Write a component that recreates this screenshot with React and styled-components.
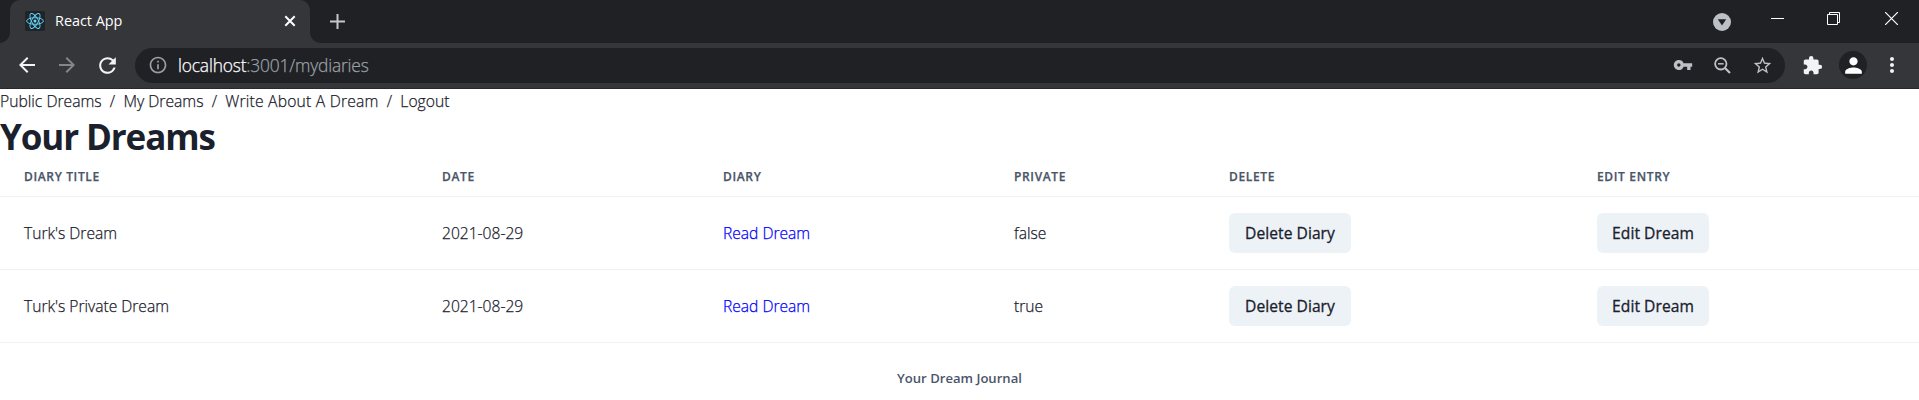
import React from "react";
import styled, { createGlobalStyle } from "styled-components";
import {
  MdArrowBack, MdArrowForward, MdRefresh, MdInfoOutline, MdVpnKey,
  MdStarBorder, MdExtension, MdPerson, MdMoreVert,
} from "react-icons/md";

const GlobalStyle = createGlobalStyle`
  *, *::before, *::after { box-sizing: border-box; }
  body {
    margin: 0;
    background: #fff;
    color: #1a202c;
    font-family: "Open Sans", "Noto Sans", sans-serif;
    font-size: 15.6px;
    font-weight: 300;
    line-height: 24px;
    -webkit-text-stroke: 0.25px currentColor;
    overflow: hidden;
  }
  svg { display: block; flex: none; }
`;

const Browser = styled.header`
  background: #35363a;
  border-bottom: 1px solid #28292c;
  height: 89px;
`;

const TabStrip = styled.div`
  display: flex;
  height: 43px;
  padding-left: 10px;
  background: #202124;
`;

const Tab = styled.div`
  position: relative;
  display: flex;
  align-items: center;
  width: 300px;
  height: 43px;
  padding: 0 14px 1px 15px;
  background: #35363a;
  border-radius: 10px 10px 0 0;

  &::before, &::after {
    content: "";
    position: absolute;
    bottom: 0;
    width: 10px;
    height: 10px;
  }
  &::before {
    left: -10px;
    background: radial-gradient(circle at 0 0, transparent 9.5px, #35363a 10px);
  }
  &::after {
    right: -10px;
    background: radial-gradient(circle at 100% 0, transparent 9.5px, #35363a 10px);
  }
`;

const TabTitle = styled.span`
  flex: 1;
  margin-left: 10px;
  color: #fff;
  font-size: 14.4px;
  font-weight: 400;
  -webkit-text-stroke: 0;
`;

const NewTab = styled.div`
  display: flex;
  align-items: center;
  padding: 0 0 1px 20px;
`;

const WindowControls = styled.div`
  display: flex;
  align-items: flex-start;
  margin-left: auto;
  padding: 12px 21px 0 0;
`;

const ControlIcon = styled.svg`
  margin-left: ${(p) => p.$gap}px;
  margin-top: ${(p) => p.$drop || 0}px;
`;

const Toolbar = styled.div`
  display: flex;
  align-items: center;
  height: 45px;
  padding: 0 0 1px 15px;
  color: #f1f3f4;
`;

const NavButton = styled.span`
  flex: none;
  width: 40px;
  color: ${(p) => (p.$disabled ? "#85868a" : "#f1f3f4")};
`;

const AddressBar = styled.div`
  display: flex;
  align-items: center;
  flex: none;
  width: 1650px;
  height: 35px;
  padding: 0 12px 0 13px;
  border-radius: 18px;
  background: #202124;
  color: #bdc1c6;
`;

const Url = styled.span`
  flex: 1;
  margin-left: 10px;
  color: #9aa0a6;
  font-size: 17.4px;
  letter-spacing: -0.18px;
`;

const Host = styled.span`
  color: #fff;
`;

const AddressActions = styled.div`
  display: flex;
  align-items: center;
  gap: 21px;
`;

const Avatar = styled.span`
  display: grid;
  place-items: center;
  width: 28px;
  height: 28px;
  margin: 0 13px 0 16px;
  border-radius: 50%;
  background: #202124;
  color: #fff;
`;

const Extensions = styled.span`
  margin-left: 17px;
`;

const SiteNav = styled.nav`
  display: flex;
  height: 24px;
  font-size: 15.7px;
`;

const NavLink = styled.a`
  color: inherit;
  letter-spacing: ${(p) => p.$spacing || 0}px;
`;

const Slash = styled.span`
  margin: 0 8.2px;
`;

const Title = styled.h1`
  height: 43px;
  margin: 0;
  padding-top: 2px;
  font-size: 35px;
  font-weight: 700;
  line-height: 43px;
  letter-spacing: -1.1px;
  -webkit-text-stroke: 0;
`;

const Table = styled.table`
  width: 100%;
  table-layout: fixed;
  border-collapse: separate;
  border-spacing: 0;
`;

const Th = styled.th`
  width: ${(p) => p.$width}px;
  height: 41px;
  padding: 13px 24px 11px;
  border-bottom: 1px solid #edf2f7;
  color: #4a5568;
  font-size: 12px;
  font-weight: 600;
  line-height: 16px;
  letter-spacing: 0.65px;
  text-align: left;
  text-transform: uppercase;
`;

const Td = styled.td`
  height: 73px;
  padding: 16px 24px;
  border-bottom: 1px solid #edf2f7;
`;

const ReadLink = styled.a`
  color: #0000ff;
`;

const Button = styled.button`
  display: block;
  width: ${(p) => p.$width}px;
  height: 40px;
  padding: 0;
  border: 0;
  border-radius: 6px;
  background: #edf2f7;
  color: #1a202c;
  font: 400 15.6px/41px "Open Sans", "Noto Sans", sans-serif;
  letter-spacing: 0.05px;
  -webkit-text-stroke: 0.3px currentColor;
  white-space: nowrap;
`;

const Footer = styled.footer`
  padding-top: 25px;
  color: #4a5568;
  font-size: 13.1px;
  font-weight: 600;
  line-height: 20px;
  text-align: center;
  -webkit-text-stroke: 0;
`;

const columns = [
  ["Diary Title", 418],
  ["Date", 281],
  ["Diary", 291],
  ["Private", 215],
  ["Delete", 368],
  ["Edit Entry", 346],
];

const diaries = [
  { title: "Turk's Dream", date: "2021-08-29", isPrivate: false },
  { title: "Turk's Private Dream", date: "2021-08-29", isPrivate: true },
];

const links = [
  { label: "Public Dreams" },
  { label: "My Dreams" },
  { label: "Write About A Dream", spacing: 0.2 },
  { label: "Logout" },
];

function ReactLogo() {
  return (
    <svg width="20" height="20" viewBox="0 0 20 20" fill="none" stroke="#61dafb" strokeWidth="0.9">
      <rect width="20" height="20" rx="1.5" fill="#20232a" stroke="none" />
      <circle cx="10" cy="10" r="1.5" fill="#61dafb" stroke="none" />
      {[0, 60, 120].map((angle) => (
        <ellipse key={angle} cx="10" cy="10" rx="8.4" ry="3.3" transform={`rotate(${angle} 10 10)`} />
      ))}
    </svg>
  );
}

function ZoomOutIcon() {
  return (
    <svg width="17" height="17" viewBox="0 0 17 17" fill="none" stroke="#bdc1c6" strokeWidth="1.8">
      <circle cx="6.8" cy="6.8" r="5.7" />
      <path d="M11 11l5 5" strokeWidth="2.2" />
      <path d="M4 6.8h5.6" strokeWidth="1.5" />
    </svg>
  );
}

function BrowserChrome() {
  return (
    <Browser>
      <TabStrip>
        <Tab>
          <ReactLogo />
          <TabTitle>React App</TabTitle>
          <svg width="12" height="12" viewBox="0 0 12 12" stroke="#fff" strokeWidth="2">
            <path d="M1.3 1.3l9.4 9.4M10.7 1.3l-9.4 9.4" />
          </svg>
        </Tab>
        <NewTab>
          <svg width="15" height="15" viewBox="0 0 15 15" stroke="#c4c7cb" strokeWidth="2">
            <path d="M7.5 0v15M0 7.5h15" />
          </svg>
        </NewTab>
        <WindowControls>
          <ControlIcon $gap={0} $drop={1} width="18" height="18" viewBox="0 0 18 18">
            <circle cx="9" cy="9" r="9" fill="#bdc1c6" />
            <path d="M4.8 6.2h8.4L9 12.6z" fill="#202124" />
          </ControlIcon>
          <ControlIcon $gap={40} width="13" height="13" stroke="#fff">
            <path d="M0 6.5h13" />
          </ControlIcon>
          <ControlIcon $gap={43} width="13" height="13" stroke="#fff" fill="none">
            <path d="M.5 2.5h10v10H.5zM2.5 2.5V.5h10v10h-2" />
          </ControlIcon>
          <ControlIcon $gap={45} width="13" height="13" stroke="#fff" strokeWidth="1.2">
            <path d="M0 0l13 13M13 0L0 13" />
          </ControlIcon>
        </WindowControls>
      </TabStrip>
      <Toolbar>
        <NavButton><MdArrowBack size={24} /></NavButton>
        <NavButton $disabled><MdArrowForward size={24} /></NavButton>
        <NavButton><MdRefresh size={25} /></NavButton>
        <AddressBar>
          <MdInfoOutline size={20} color="#9aa0a6" />
          <Url><Host>localhost</Host>:3001/mydiaries</Url>
          <AddressActions>
            <MdVpnKey size={20} />
            <ZoomOutIcon />
            <MdStarBorder size={21} />
          </AddressActions>
        </AddressBar>
        <Extensions><MdExtension size={21} /></Extensions>
        <Avatar><MdPerson size={25} /></Avatar>
        <MdMoreVert size={24} />
      </Toolbar>
    </Browser>
  );
}

export default function App() {
  return (
    <>
      <GlobalStyle />
      <BrowserChrome />
      <SiteNav>
        {links.map((link, i) => (
          <React.Fragment key={link.label}>
            {i > 0 && <Slash>/</Slash>}
            <NavLink $spacing={link.spacing}>{link.label}</NavLink>
          </React.Fragment>
        ))}
      </SiteNav>
      <Title>Your Dreams</Title>
      <Table>
        <thead>
          <tr>
            {columns.map(([name, width]) => (
              <Th key={name} $width={width}>{name}</Th>
            ))}
          </tr>
        </thead>
        <tbody>
          {diaries.map((diary) => (
            <tr key={diary.title}>
              <Td>{diary.title}</Td>
              <Td>{diary.date}</Td>
              <Td><ReadLink>Read Dream</ReadLink></Td>
              <Td>{String(diary.isPrivate)}</Td>
              <Td><Button $width={122}>Delete Diary</Button></Td>
              <Td><Button $width={112}>Edit Dream</Button></Td>
            </tr>
          ))}
        </tbody>
      </Table>
      <Footer>Your Dream Journal</Footer>
    </>
  );
}
